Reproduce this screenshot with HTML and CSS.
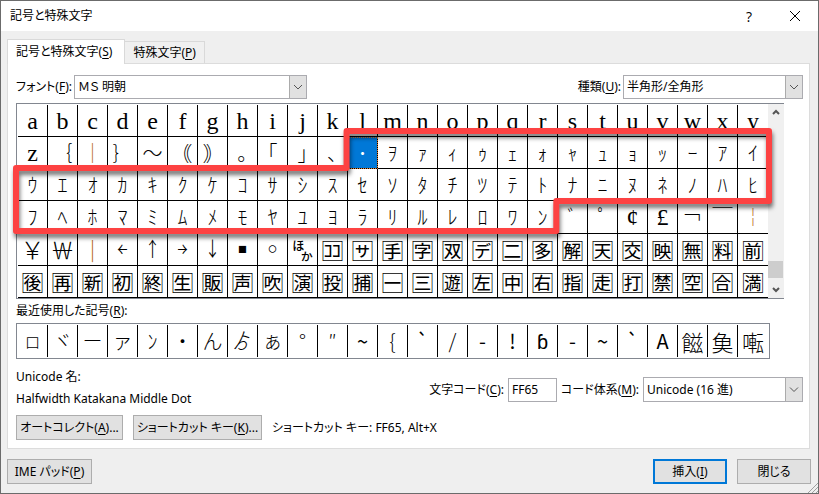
FILE: index.html
```html
<!DOCTYPE html>
<html lang="ja">
<head>
<meta charset="utf-8">
<title>記号と特殊文字</title>
<link rel="stylesheet" href="styles.css">
</head>
<body>
<main class="dialog">
  <header class="titlebar">
    <h1>記号と特殊文字</h1>
    <button class="caption">?</button>
    <button class="caption" aria-label="閉じる"><svg width="12" height="12" viewBox="0 0 12 12"><path d="M1 1l10 10M11 1L1 11"/></svg></button>
  </header>
  <nav class="tabs" role="tablist">
    <button class="tab active" role="tab">記号と特殊文字(<u>S</u>)</button>
    <button class="tab" role="tab">特殊文字(<u>P</u>)</button>
  </nav>
  <section class="panel">
    <div class="filters">
      <label for="font">フォント(<u>F</u>):</label>
      <div class="combo font-combo"><select id="font"><option>ＭＳ 明朝</option></select><svg viewBox="0 0 16 22"><path d="M4 9l4 4 4-4"/></svg></div>
      <label class="push" for="subset">種類(<u>U</u>):</label>
      <div class="combo subset-combo"><select id="subset"><option>半角形/全角形</option></select><svg viewBox="0 0 16 22"><path d="M4 9l4 4 4-4"/></svg></div>
    </div>
    <div class="picker">
      <table class="symbols">
        <tr class="latin"><td>a<td>b<td>c<td>d<td>e<td>f<td>g<td>h<td>i<td>j<td>k<td>l<td>m<td>n<td>o<td>p<td>q<td>r<td>s<td>t<td>u<td>v<td>w<td>x<td>y</tr>
        <tr><td class="serif">z<td>｛<td class="amber">｜<td>｝<td>～<td>｟<td>｠<td>｡<td>｢<td>｣<td>､<td class="selected">･<td>ｦ<td>ｧ<td>ｨ<td>ｩ<td>ｪ<td>ｫ<td>ｬ<td>ｭ<td>ｮ<td>ｯ<td>ｰ<td>ｱ<td>ｲ</tr>
        <tr><td>ｳ<td>ｴ<td>ｵ<td>ｶ<td>ｷ<td>ｸ<td>ｹ<td>ｺ<td>ｻ<td>ｼ<td>ｽ<td>ｾ<td>ｿ<td>ﾀ<td>ﾁ<td>ﾂ<td>ﾃ<td>ﾄ<td>ﾅ<td>ﾆ<td>ﾇ<td>ﾈ<td>ﾉ<td>ﾊ<td>ﾋ</tr>
        <tr><td>ﾌ<td>ﾍ<td>ﾎ<td>ﾏ<td>ﾐ<td>ﾑ<td>ﾒ<td>ﾓ<td>ﾔ<td>ﾕ<td>ﾖ<td>ﾗ<td>ﾘ<td>ﾙ<td>ﾚ<td>ﾛ<td>ﾜ<td>ﾝ<td>ﾞ<td>ﾟ<td class="serif">¢<td class="serif">£<td>￢<td>￣<td class="amber">￤</tr>
        <tr><td class="currency">￥<td class="currency">￦<td class="amber">￨<td>￩<td>￪<td>￫<td>￬<td>￭<td>￮<td class="boxed">🈀<td class="boxed">🈁<td class="boxed">🈂<td class="boxed">🈐<td class="boxed">🈑<td class="boxed">🈒<td class="boxed">🈓<td class="boxed">🈔<td class="boxed">🈕<td class="boxed">🈖<td class="boxed">🈗<td class="boxed">🈘<td class="boxed">🈙<td class="boxed">🈚<td class="boxed">🈛<td class="boxed">🈜</tr>
        <tr class="boxed"><td>🈝<td>🈞<td>🈟<td>🈠<td>🈡<td>🈢<td>🈣<td>🈤<td>🈥<td>🈦<td>🈧<td>🈨<td>🈩<td>🈪<td>🈫<td>🈬<td>🈭<td>🈮<td>🈯<td>🈰<td>🈱<td>🈲<td>🈳<td>🈴<td>🈵</tr>
      </table>
      <div class="scrollbar">
        <svg viewBox="0 0 16 16"><path d="M5 10l3-3 3 3"/></svg>
        <div class="thumb"></div>
        <svg viewBox="0 0 16 16"><path d="M5 6l3 3 3-3"/></svg>
      </div>
      <svg class="callout" viewBox="0 0 768 196"><path d="M331 28H754V98H541V128H0V65H331Z"/></svg>
    </div>
    <div class="recent-label">最近使用した記号(<u>R</u>):</div>
    <div class="recent">
      <table class="symbols">
        <tr><td class="small">ロ<td>ヾ<td>ー<td>ァ<td>ﾝ<td>・<td>ん<td>ゟ<td>ぁ<td>°<td>″<td class="sans">~<td>{<td class="sans">`<td>/<td class="sans">-<td class="sans">!<td>ɓ<td class="sans">-<td class="sans">~<td class="sans">`<td class="sans">A<td class="kanji">𩝐<td class="kanji">𩵋<td class="kanji">𫝚</tr>
      </table>
    </div>
    <div class="details">
      <div class="name"><p>Unicode 名:</p><p>Halfwidth Katakana Middle Dot</p></div>
      <div class="code">
        <label for="code">文字コード(<u>C</u>):</label>
        <input id="code" value="FF65">
        <label for="from">コード体系(<u>M</u>):</label>
        <div class="combo from-combo"><select id="from"><option>Unicode (16 進)</option></select><svg viewBox="0 0 16 22"><path d="M4 9l4 4 4-4"/></svg></div>
      </div>
    </div>
    <div class="actions">
      <button class="btn auto">オートコレクト(<u>A</u>)...</button>
      <button class="btn shortcut">ショートカット キー(<u>K</u>)...</button>
      <span>ショートカット キー: FF65, Alt+X</span>
    </div>
  </section>
  <footer class="footer">
    <button class="btn ime">IME パッド(<u>P</u>)</button>
    <button class="btn primary">挿入(<u>I</u>)</button>
    <button class="btn">閉じる</button>
  </footer>
  <svg class="grip" viewBox="0 0 10 10"><path d="M0 10L10 0M4 10l6-6M8 10l2-2"/></svg>
</main>
</body>
</html>
```
FILE: styles.css
```css
* { box-sizing: border-box; }
body {
  margin: 0;
  color: #000;
  font: 12px/18px "Noto Sans", "Noto Sans CJK JP", sans-serif;
  font-feature-settings: "palt";
}
button, input, select { font: inherit; font-feature-settings: inherit; color: inherit; }
p, h1 { margin: 0; }
u { text-underline-offset: 2px; }

.dialog {
  position: relative;
  display: flex;
  flex-direction: column;
  min-height: 100vh;
  border: 1px solid #6b6b6b;
  background: #efefef;
}
.titlebar { display: flex; align-items: center; height: 30px; padding-left: 9px; background: #fff; }
.titlebar h1 { flex: 1; font-size: 12px; font-weight: 400; }
.caption { display: grid; place-items: center; width: 46px; height: 30px; padding: 0; border: 0; background: none; font: 14px "Open Sans", sans-serif; }
.caption svg { fill: none; stroke: #000; }

.tabs { display: flex; align-items: flex-end; height: 32px; padding-left: 6px; }
.tab { height: 22px; padding: 0 8px; border: 1px solid #d9d9d9; border-bottom: 0; background: #f0f0f0; white-space: nowrap; }
.tab.active { position: relative; height: 25px; margin: 0 -1px -1px 0; padding: 0 12px 0 8px; background: #fff; }

.panel { margin: 0 8px 0 6px; padding: 10px 6px 8px 8px; border: 1px solid #dcdcdc; background: #fff; }
.filters { display: flex; align-items: center; gap: 2px; height: 25px; margin-bottom: 4px; white-space: nowrap; }
.push { margin-left: auto; }
.combo { position: relative; height: 24px; }
.combo select { width: 100%; height: 100%; padding: 0 20px 0 3px; border: 1px solid #ababb0; border-radius: 0; background: #fff; appearance: none; outline: 0; }
.combo svg { position: absolute; top: 1px; right: 1px; width: 17px; height: calc(100% - 2px); border-left: 1px solid #ababab; background: #e1e1e1; fill: none; stroke: #555; pointer-events: none; }
.font-combo { width: 233px; }
.subset-combo { width: 180px; }
.from-combo { width: 160px; height: 25px; }

.picker { position: relative; display: flex; height: 196px; margin-right: 19px; padding: 1px 0 0 1px; border: 1px solid #828790; border-right: 0; }
.symbols { flex: 1; width: 100%; table-layout: fixed; border-spacing: 0; font: 300 20px/24px "Noto Sans CJK JP", sans-serif; font-feature-settings: normal; }
.symbols td { height: 32px; padding: 0; border: 0 solid #000; border-width: 0 1px 1px 0; text-align: center; white-space: nowrap; overflow: hidden; }
.symbols td:last-child { border-right: 0; }
.symbols .latin td, .symbols .serif { font-family: "Liberation Serif", serif; font-size: 24px; font-weight: 400; }
.symbols .boxed, .symbols .boxed td { font-size: 22px; font-weight: 400; }
.symbols .currency { font-size: 24px; }
.symbols .kanji { font-size: 22px; }
.symbols .amber { color: #b86414; }
.symbols .selected { background: #0078d7; color: #fff; outline: 1px dotted #e08030; outline-offset: -1px; }
.symbols .small { font-size: 16px; }
.symbols .sans { font-weight: 400; }
.scrollbar { display: flex; flex-direction: column; width: 16px; margin-top: -1px; background: #f0f0f0; }
.scrollbar svg { width: 16px; height: 16px; fill: none; stroke: #555; stroke-width: 2; }
.thumb { height: 17px; margin: auto 1px 4px 0; background: #cdcdcd; }
.callout { position: absolute; inset: -1px auto auto -1px; width: 100%; height: 196px; overflow: visible; fill: none; stroke: #fd4242; stroke-width: 6; stroke-linejoin: round; filter: drop-shadow(1px 4px 2px #0008); pointer-events: none; }
.recent-label { line-height: 24px; }
.recent { margin-right: 33px; padding: 1px; border: 1px solid #828790; }
.recent td { border-bottom: 0; }

.details { display: flex; justify-content: space-between; padding-top: 7px; white-space: nowrap; }
.name { line-height: 22px; }
.code { display: flex; align-items: center; gap: 4px; height: 25px; margin-top: 11px; }
.code input { width: 49px; height: 24px; padding: 0 3px; border: 1px solid #ababb0; outline: 0; }
.actions { display: flex; align-items: center; gap: 10px; margin-top: 5px; white-space: nowrap; }
.btn { width: 74px; height: 25px; padding: 0; border: 1px solid #adadad; background: #e1e1e1; white-space: nowrap; }
.auto { width: 107px; }
.shortcut { width: 129px; }
.footer { display: flex; gap: 10px; padding: 10px 7px 8px 6px; }
.ime { width: 85px; margin-right: auto; }
.primary { border: 2px solid #0078d7; }
.grip { position: absolute; right: 0; bottom: 0; width: 10px; height: 10px; stroke: #a0a0a0; }
```
